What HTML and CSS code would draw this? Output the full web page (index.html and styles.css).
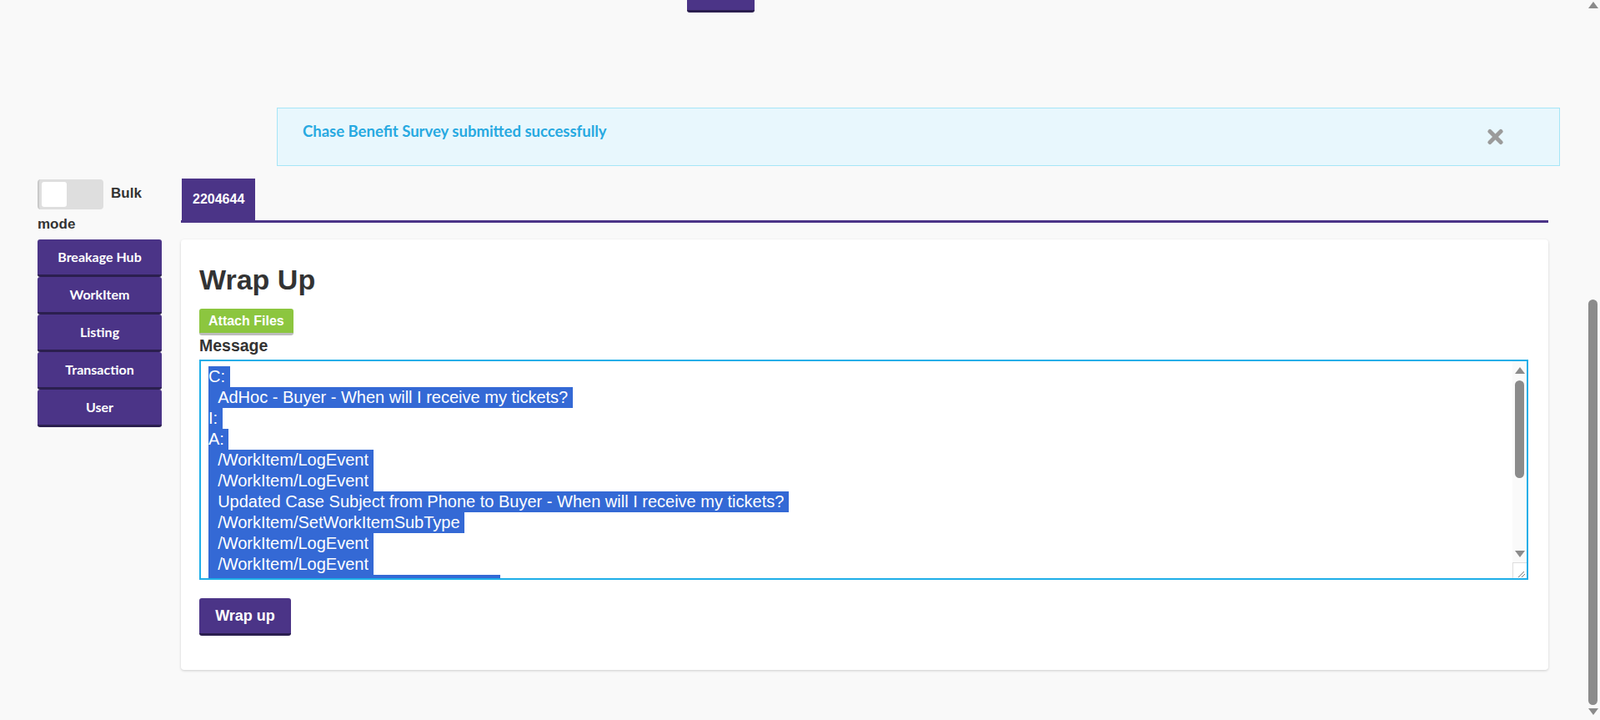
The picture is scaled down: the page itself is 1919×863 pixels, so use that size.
FILE: index.html
```html
<!DOCTYPE html>
<html lang="en">
<head>
    <meta charset="UTF-8">
    <meta name="viewport" content="width=device-width, initial-scale=1.0">
    <title>Wrap Up</title>
    <link rel="stylesheet" href="styles.css">
</head>
<body>
    <!-- survey form sits above the fold, only its submit button peeks in -->
    <div id="survey">
        <button class="purple-btn survey-submit" aria-label="Submit"></button>
    </div>

    <div id="alert">
        <span class="alert-text">Chase Benefit Survey submitted successfully</span>
        <span class="alert-close">
            <svg width="21" height="20" viewBox="0 0 21 20">
                <line x1="4" y1="3.5" x2="17" y2="16.5" stroke="#9b9b9b" stroke-width="5" stroke-linecap="round"/>
                <line x1="17" y1="3.5" x2="4" y2="16.5" stroke="#9b9b9b" stroke-width="5" stroke-linecap="round"/>
            </svg>
        </span>
    </div>

    <div id="page">
        <div id="sidebar">
            <label class="bulk"><span class="toggle"><span class="knob"></span></span>Bulk mode</label>
            <div class="nav">
                <button class="purple-btn nav-btn">Breakage Hub</button>
                <button class="purple-btn nav-btn">WorkItem</button>
                <button class="purple-btn nav-btn">Listing</button>
                <button class="purple-btn nav-btn">Transaction</button>
                <button class="purple-btn nav-btn">User</button>
            </div>
        </div>

        <div id="main">
            <div class="tabs">
                <div class="tab">2204644</div>
            </div>
            <div class="card">
                <h2>Wrap Up</h2>
                <button class="attach-btn">Attach Files</button>
                <label for="message" class="msg-label">Message</label>
                <div class="msg-box">
                    <textarea id="message">C:
  AdHoc - Buyer - When will I receive my tickets?
I:
A:
  /WorkItem/LogEvent
  /WorkItem/LogEvent
  Updated Case Subject from Phone to Buyer - When will I receive my tickets?
  /WorkItem/SetWorkItemSubType
  /WorkItem/LogEvent
  /WorkItem/LogEvent
  /WorkItem/UITransactionConfirmation
  /WorkItem/LogEvent
  /WorkItem/LogEvent
  /WorkItem/LogEvent
  /Survey/ChaseBenefitSurvey
  /WorkItem/LogEvent
  /WorkItem/WrapUp</textarea>
                    <!-- scrollbar drawn by hand, the browser hides the real one -->
                    <div class="ta-scrollbar">
                        <span class="sb-arrow up"></span>
                        <span class="sb-track"><span class="sb-thumb"></span></span>
                        <span class="sb-arrow down"></span>
                        <span class="sb-resizer">
                            <svg width="17" height="19" viewBox="0 0 17 19">
                                <line x1="13" y1="10" x2="6" y2="17" stroke="#7a7a7a" stroke-width="1"/>
                                <line x1="14" y1="13" x2="10" y2="17" stroke="#7a7a7a" stroke-width="1"/>
                            </svg>
                        </span>
                    </div>
                </div>
                <button class="purple-btn wrap-btn">Wrap up</button>
            </div>
        </div>
    </div>

    <div id="page-scrollbar">
        <span class="sb-arrow up"></span>
        <span class="sb-track"><span class="sb-thumb"></span></span>
        <span class="sb-arrow down"></span>
    </div>

    <script>
        let message = document.getElementById("message");
        message.focus({ preventScroll: true });
        message.setSelectionRange(0, message.value.length, "backward");
        message.scrollTop = 0;
        window.scrollTo(0, 611);
    </script>
</body>
</html>
```

FILE: styles.css
```css
html, body {
    margin: 0;
    padding: 0;
}
html {
    scrollbar-width: none;
}
body {
    background-color: #f9f9f9;
    color: #333;
    font-family: Arial, "Liberation Sans", sans-serif;
}

.purple-btn {
    background-color: #4b3487;
    color: white;
    border: none;
    border-bottom: 3px solid #2b1f4f;
    border-radius: 3px;
    font-family: Arial, "Liberation Sans", sans-serif;
    font-weight: bold;
    cursor: pointer;
    margin: 0;
    padding: 0;
}

#survey {
    height: 626px;
    box-sizing: border-box;
    padding-left: 824px;
    display: flex;
    align-items: flex-end;
}
.survey-submit {
    width: 81px;
    height: 64px;
}

#alert {
    margin: 114px 0 0 332px;
    width: 1539px;
    height: 70px;
    box-sizing: border-box;
    background-color: #e8f7fd;
    border: 1px solid #a6e6f7;
    padding: 16px 66px 0 30px;
    display: flex;
    justify-content: space-between;
    align-items: flex-start;
}
.alert-text {
    font-family: Lato, sans-serif;
    font-weight: bold;
    font-size: 18.5px;
    color: #27a9e1;
}
.alert-close {
    margin-top: 8px;
    line-height: 0;
    cursor: pointer;
}

#page {
    display: flex;
    margin-top: 15px;
    padding-bottom: 60px;
}
#sidebar {
    margin-left: 45px;
    width: 149px;
    flex-shrink: 0;
}
.bulk {
    display: block;
    font-size: 17px;
    font-weight: bold;
    line-height: 36px;
}
.toggle {
    display: inline-block;
    vertical-align: middle;
    width: 79px;
    height: 36px;
    box-sizing: border-box;
    padding: 3px;
    margin-right: 9px;
    background-color: #dedede;
    border-left: 2px solid #c9c9c9;
    border-radius: 4px;
}
.knob {
    display: block;
    width: 30px;
    height: 30px;
    background-color: white;
    border-radius: 3px;
}
.nav-btn {
    display: block;
    width: 149px;
    height: 45px;
    font-family: Lato, sans-serif;
    font-size: 16px;
}

#main {
    margin-left: 23px;
    width: 1640px;
}
.tabs {
    display: flex;
    padding-left: 1px;
    border-bottom: 3px solid #4b3487;
}
.tab {
    background-color: #4b3487;
    color: white;
    font-weight: bold;
    font-size: 16px;
    height: 50px;
    line-height: 50px;
    padding: 0 13px;
}
.card {
    margin-top: 20px;
    background-color: white;
    border-radius: 4px;
    box-shadow: 0 1px 3px rgba(0, 0, 0, 0.18);
    padding: 30px 24px 41px 22px;
}
.card h2 {
    margin: 0 0 16px;
    font-size: 34px;
    line-height: 1.1;
    color: #333;
}
.attach-btn {
    display: block;
    height: 32px;
    padding: 0 11px;
    background-color: #8cc63f;
    color: white;
    border: none;
    border-bottom: 3px solid #bdbdbd;
    border-radius: 3px;
    font-family: Arial, "Liberation Sans", sans-serif;
    font-weight: bold;
    font-size: 16px;
    cursor: pointer;
}
.msg-label {
    display: block;
    margin: 1px 0 5px;
    font-size: 19.5px;
    font-weight: bold;
}
.msg-box {
    position: relative;
}
#message {
    display: block;
    width: 100%;
    height: 264px;
    box-sizing: border-box;
    margin: 0;
    padding: 6px 9px;
    border: 2px solid #1eaee8;
    border-radius: 0;
    outline: none;
    resize: none;
    scrollbar-width: none;
    font-family: Arial, "Liberation Sans", sans-serif;
    font-size: 20px;
    line-height: 25px;
    color: #333;
    background-color: white;
}
#message::selection {
    background-color: #3469d5;
    color: white;
}
.wrap-btn {
    margin-top: 22px;
    width: 110px;
    height: 45px;
    font-size: 18px;
}

/* hand drawn scrollbars */
.ta-scrollbar,
#page-scrollbar {
    display: flex;
    flex-direction: column;
    align-items: center;
    width: 17px;
    pointer-events: none;
}
.ta-scrollbar {
    position: absolute;
    top: 2px;
    right: 2px;
    bottom: 2px;
    background-color: #fafafa;
}
#page-scrollbar {
    position: fixed;
    top: 0;
    right: 0;
    height: 100vh;
    background-color: #f9f9f9;
}
.sb-arrow {
    width: 0;
    height: 0;
    border-left: 6px solid transparent;
    border-right: 6px solid transparent;
}
.sb-arrow.up {
    margin-top: 7px;
    border-bottom: 8px solid #8b8b8b;
}
.sb-arrow.down {
    margin-bottom: 6px;
    border-top: 8px solid #8b8b8b;
}
.sb-track {
    flex: 1;
    width: 11px;
}
.sb-thumb {
    display: block;
    width: 11px;
    margin-top: 8px;
    height: 117px;
    background-color: #8b8b8b;
    border-radius: 6px;
}
.sb-resizer {
    width: 17px;
    height: 19px;
    box-sizing: border-box;
    border-top: 1px solid #dddddd;
    border-left: 1px solid #dddddd;
    background-color: white;
    line-height: 0;
}
#page-scrollbar .sb-arrow.up {
    margin-top: 2px;
}
#page-scrollbar .sb-arrow.down {
    margin-bottom: 6px;
}
#page-scrollbar .sb-thumb {
    margin-top: 349px;
    height: 486px;
}
```
